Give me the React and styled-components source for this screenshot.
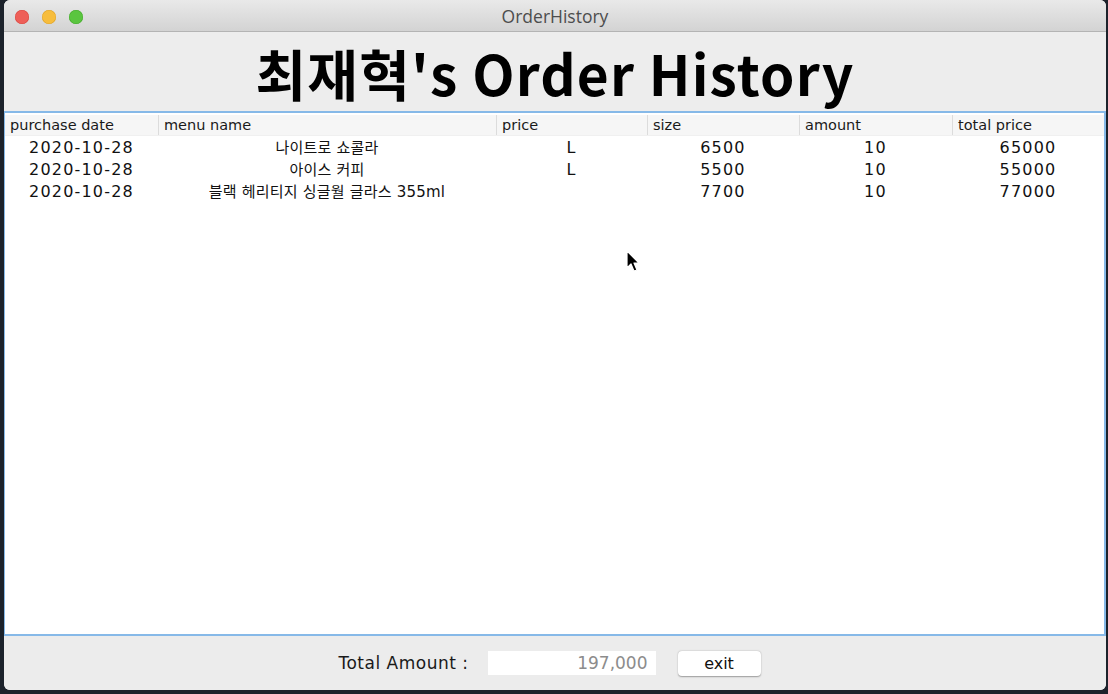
import React from 'react'
import styled, { createGlobalStyle } from 'styled-components'

const GlobalStyle = createGlobalStyle`
  html, body {
    margin: 0;
    padding: 0;
    background: #1c222b;
  }
  body {
    width: 1108px;
    height: 694px;
    overflow: hidden;
    font-family: "DejaVu Sans", "Noto Sans CJK KR", sans-serif;
  }
`

const columns = [
  { title: 'purchase date', width: 153 },
  { title: 'menu name', width: 338, korean: true },
  { title: 'price', width: 151 },
  { title: 'size', width: 152 },
  { title: 'amount', width: 153 },
  { title: 'total price', width: 152 },
]

const rows = [
  ['2020-10-28', '나이트로 쇼콜라', 'L', '6500', '10', '65000'],
  ['2020-10-28', '아이스 커피', 'L', '5500', '10', '55000'],
  ['2020-10-28', '블랙 헤리티지 싱글월 글라스 355ml', '', '7700', '10', '77000'],
]

const App = () => {
  return (
    <>
      <GlobalStyle />
      <Window>
        <TitleBar>
          <Lights>
            <Light color="#ee5f58" border="#d9463f" />
            <Light color="#f7bd3c" border="#dea32b" />
            <Light color="#5ac53f" border="#44a92c" />
          </Lights>
          <Title>OrderHistory</Title>
        </TitleBar>
        <HeadingArea>
          <Heading>최재혁's Order History</Heading>
        </HeadingArea>
        <TablePane>
          <HeaderRow>
            {columns.map((c) => (
              <HeaderCell key={c.title} w={c.width}>{c.title}</HeaderCell>
            ))}
          </HeaderRow>
          {rows.map((r, i) => (
            <Row key={i}>
              {r.map((v, j) => (
                <Cell key={j} w={columns[j].width} korean={columns[j].korean}>{v}</Cell>
              ))}
            </Row>
          ))}
          <Cursor width="16" height="24" viewBox="0 0 16 24">
            <path d="M1 1 L1 18 L5 14 L8 21 L11 20 L8 13 L13 13 Z" fill="#000" stroke="#fff" strokeWidth="1.2" strokeLinejoin="round" />
          </Cursor>
        </TablePane>
        <Footer>
          <FooterLabel>Total Amount :</FooterLabel>
          <AmountField>197,000</AmountField>
          <ExitButton>exit</ExitButton>
        </Footer>
      </Window>
    </>
  )
}

export default App

const Window = styled.div`
  margin-left: 4px;
  width: 1102px;
  height: 690px;
  display: flex;
  flex-direction: column;
  background: #ededed;
  border-radius: 6px;
  overflow: hidden;
`

const TitleBar = styled.div`
  position: relative;
  height: 31px;
  flex: none;
  display: flex;
  align-items: center;
  justify-content: center;
  background: linear-gradient(#e9e9e9, #d3d3d3);
  border-bottom: 1px solid #b4b4b4;
`

const Lights = styled.div`
  position: absolute;
  left: 11px;
  top: 10px;
  display: flex;
  gap: 13px;
`

const Light = styled.span`
  width: 14px;
  height: 14px;
  border-radius: 50%;
  background: ${(p) => p.color};
  box-shadow: inset 0 0 0 0.5px ${(p) => p.border};
`

const Title = styled.div`
  font-family: "Open Sans", "DejaVu Sans", sans-serif;
  font-size: 17.5px;
  color: #4d4d4d;
`

const HeadingArea = styled.div`
  height: 79px;
  flex: none;
  display: flex;
  align-items: center;
  justify-content: center;
  background: #ededed;
`

const Heading = styled.h1`
  margin: 0;
  font-family: "Noto Sans CJK KR", sans-serif;
  font-size: 55px;
  font-weight: 700;
  color: #000;
  letter-spacing: 1.2px;
`

const TablePane = styled.div`
  position: relative;
  flex: 1;
  background: #fff;
  border: 2px solid #86b9e8;
  border-left-width: 1px;
  border-right-width: 2px;
`

const HeaderRow = styled.div`
  display: flex;
  height: 20px;
  margin-top: 2px;
  margin-bottom: 1px;
  background: #f6f6f6;
  border-bottom: 1px solid #f0f0f0;
`

const HeaderCell = styled.div`
  width: ${(p) => p.w}px;
  flex: none;
  box-sizing: border-box;
  padding-left: 5px;
  font-size: 14.5px;
  line-height: 20px;
  color: #1a1a1a;
  border-left: 1px solid #dcdcdc;
  &:first-child {
    border-left: none;
  }
`

const Row = styled.div`
  display: flex;
  height: 22px;
`

const Cell = styled.div`
  width: ${(p) => p.w}px;
  flex: none;
  text-align: center;
  font-size: ${(p) => (p.korean ? '15px' : '16px')};
  line-height: 22px;
  letter-spacing: ${(p) => (p.korean ? '0.2px' : '1.2px')};
  color: #111;
  white-space: nowrap;
`

const Cursor = styled.svg`
  position: absolute;
  left: 621px;
  top: 137px;
`

const Footer = styled.div`
  height: 54px;
  flex: none;
  display: flex;
  align-items: center;
  justify-content: center;
  gap: 18px;
  padding-right: 11px;
  background: #ececec;
`

const FooterLabel = styled.span`
  font-size: 17px;
  letter-spacing: 0.5px;
  color: #1a1a1a;
  margin-right: 1px;
`

const AmountField = styled.div`
  width: 160px;
  height: 24px;
  padding-right: 8px;
  box-sizing: content-box;
  background: #fff;
  text-align: right;
  font-size: 17px;
  line-height: 24px;
  color: #8c8c8c;
`

const ExitButton = styled.button`
  width: 83px;
  height: 25px;
  margin-left: 4px;
  background: #fff;
  border: none;
  border-radius: 4px;
  box-shadow: 0 0.5px 1.5px rgba(0, 0, 0, 0.35);
  font-family: "DejaVu Sans", sans-serif;
  font-size: 16px;
  color: #111;
`
